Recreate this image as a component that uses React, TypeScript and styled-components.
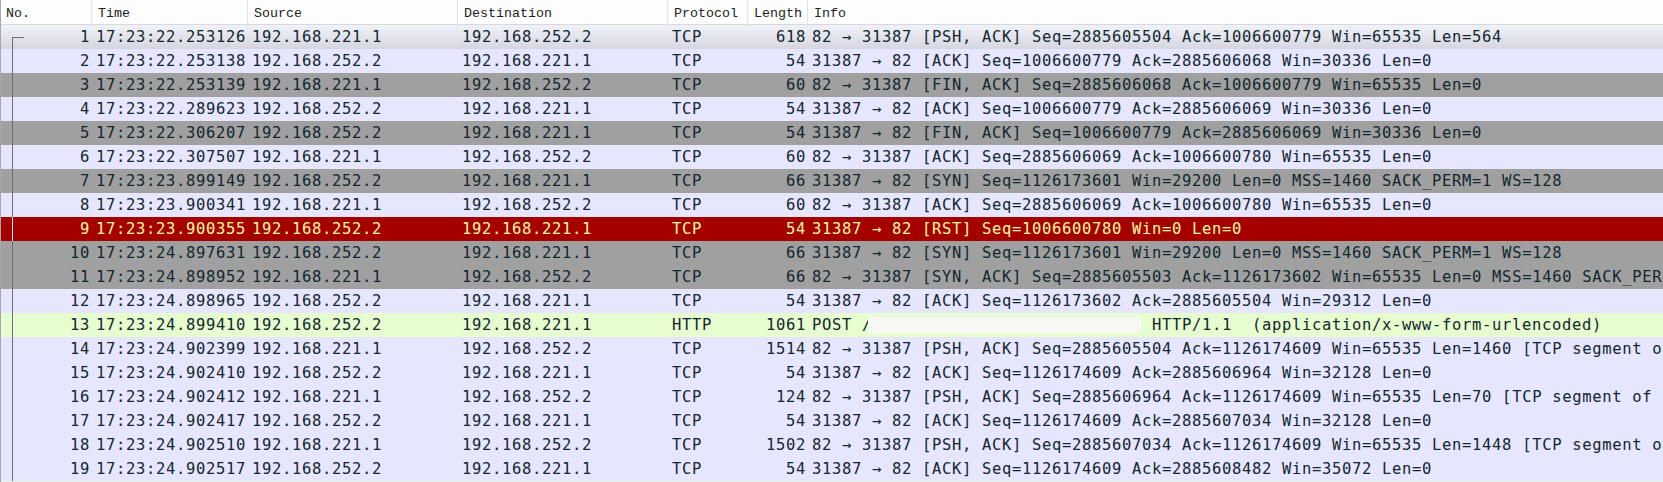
import React from "react";
import styled, { createGlobalStyle, css } from "styled-components";

const Global = createGlobalStyle`
  html, body { margin: 0; padding: 0; background: #fff; overflow: hidden; }
`;

type Kind = "tcp" | "gray" | "red" | "http" | "first";

const palette: Record<Kind, { bg: string; fg: string }> = {
  tcp: { bg: "#e7e6ff", fg: "#12272e" },
  first: { bg: "linear-gradient(#f1f1fa, #d6d6e0)", fg: "#12272e" },
  gray: { bg: "#a0a0a0", fg: "#12272e" },
  red: { bg: "#a40000", fg: "#fffc9c" },
  http: { bg: "#e5fdcf", fg: "#12272e" },
};

const Page = styled.div`
  width: 1663px;
  height: 482px;
  overflow: hidden;
  border-left: 1px solid #a6a6ac;
  box-sizing: border-box;
  background: #e6f6e2;
`;

const Columns = css`
  display: grid;
  grid-template-columns: 91px 156px 210px 210px 80px 60px 1fr;
`;

const Header = styled.div`
  ${Columns}
  height: 24px;
  background: #fdfdfd;
  border-bottom: 1px solid #d9d9dc;
`;

const HeadCell = styled.div`
  font-family: "Liberation Mono", monospace;
  font-size: 13.33px;
  line-height: 27px;
  color: #222;
  padding-left: 6px;
  border-right: 1px solid #e4e4e4;
  white-space: nowrap;
  &:first-child { padding-left: 5px; }
  &:last-child { border-right: none; }
`;

const Row = styled.div<{ $kind: Kind }>`
  ${Columns}
  height: 24px;
  background: ${(p) => palette[p.$kind].bg};
  color: ${(p) => palette[p.$kind].fg};
  font-family: "DejaVu Sans Mono", monospace;
  font-size: 15.5px;
  letter-spacing: 0.67px;
  line-height: 24px;
  white-space: pre;
`;

const Cell = styled.div<{ $right?: boolean }>`
  padding-left: ${(p) => (p.$right ? 0 : "4px")};
  padding-right: ${(p) => (p.$right ? "2px" : 0)};
  text-align: ${(p) => (p.$right ? "right" : "left")};
`;

const NoCell = styled(Cell)<{ $first?: boolean; $light?: boolean }>`
  position: relative;
  &::before {
    content: "";
    position: absolute;
    left: 11px;
    top: ${(p) => (p.$first ? "12px" : 0)};
    bottom: 0;
    width: 1px;
    background: ${(p) => (p.$light ? "#f5f5f5" : "#6f6f78")};
  }
  &::after {
    content: "";
    display: ${(p) => (p.$first ? "block" : "none")};
    position: absolute;
    left: 11px;
    top: 12px;
    width: 12px;
    height: 1px;
    background: #6f6f78;
  }
`;

const Redacted = styled.span`
  display: inline-block;
  width: 273px;
  height: 16px;
  margin: 4px 1px 0 -4px;
  vertical-align: top;
  background: #f7f7f5;
`;

const heads = ["No.", "Time", "Source", "Destination", "Protocol", "Length", "Info"];

const A = "192.168.221.1";
const B = "192.168.252.2";

type P = [string, string, string, string, string, string, React.ReactNode, Kind];

const rows: P[] = [
  ["1", "17:23:22.253126", A, B, "TCP", "618", "82 → 31387 [PSH, ACK] Seq=2885605504 Ack=1006600779 Win=65535 Len=564", "first"],
  ["2", "17:23:22.253138", B, A, "TCP", "54", "31387 → 82 [ACK] Seq=1006600779 Ack=2885606068 Win=30336 Len=0", "tcp"],
  ["3", "17:23:22.253139", A, B, "TCP", "60", "82 → 31387 [FIN, ACK] Seq=2885606068 Ack=1006600779 Win=65535 Len=0", "gray"],
  ["4", "17:23:22.289623", B, A, "TCP", "54", "31387 → 82 [ACK] Seq=1006600779 Ack=2885606069 Win=30336 Len=0", "tcp"],
  ["5", "17:23:22.306207", B, A, "TCP", "54", "31387 → 82 [FIN, ACK] Seq=1006600779 Ack=2885606069 Win=30336 Len=0", "gray"],
  ["6", "17:23:22.307507", A, B, "TCP", "60", "82 → 31387 [ACK] Seq=2885606069 Ack=1006600780 Win=65535 Len=0", "tcp"],
  ["7", "17:23:23.899149", B, A, "TCP", "66", "31387 → 82 [SYN] Seq=1126173601 Win=29200 Len=0 MSS=1460 SACK_PERM=1 WS=128", "gray"],
  ["8", "17:23:23.900341", A, B, "TCP", "60", "82 → 31387 [ACK] Seq=2885606069 Ack=1006600780 Win=65535 Len=0", "tcp"],
  ["9", "17:23:23.900355", B, A, "TCP", "54", "31387 → 82 [RST] Seq=1006600780 Win=0 Len=0", "red"],
  ["10", "17:23:24.897631", B, A, "TCP", "66", "31387 → 82 [SYN] Seq=1126173601 Win=29200 Len=0 MSS=1460 SACK_PERM=1 WS=128", "gray"],
  ["11", "17:23:24.898952", A, B, "TCP", "66", "82 → 31387 [SYN, ACK] Seq=2885605503 Ack=1126173602 Win=65535 Len=0 MSS=1460 SACK_PER", "gray"],
  ["12", "17:23:24.898965", B, A, "TCP", "54", "31387 → 82 [ACK] Seq=1126173602 Ack=2885605504 Win=29312 Len=0", "tcp"],
  ["13", "17:23:24.899410", B, A, "HTTP", "1061", <>POST /<Redacted /> HTTP/1.1  (application/x-www-form-urlencoded)</>, "http"],
  ["14", "17:23:24.902399", A, B, "TCP", "1514", "82 → 31387 [PSH, ACK] Seq=2885605504 Ack=1126174609 Win=65535 Len=1460 [TCP segment o", "tcp"],
  ["15", "17:23:24.902410", B, A, "TCP", "54", "31387 → 82 [ACK] Seq=1126174609 Ack=2885606964 Win=32128 Len=0", "tcp"],
  ["16", "17:23:24.902412", A, B, "TCP", "124", "82 → 31387 [PSH, ACK] Seq=2885606964 Ack=1126174609 Win=65535 Len=70 [TCP segment of", "tcp"],
  ["17", "17:23:24.902417", B, A, "TCP", "54", "31387 → 82 [ACK] Seq=1126174609 Ack=2885607034 Win=32128 Len=0", "tcp"],
  ["18", "17:23:24.902510", A, B, "TCP", "1502", "82 → 31387 [PSH, ACK] Seq=2885607034 Ack=1126174609 Win=65535 Len=1448 [TCP segment o", "tcp"],
  ["19", "17:23:24.902517", B, A, "TCP", "54", "31387 → 82 [ACK] Seq=1126174609 Ack=2885608482 Win=35072 Len=0", "tcp"],
];

export default function App() {
  return (
    <Page>
      <Global />
      <Header>
        {heads.map((h) => (
          <HeadCell key={h}>{h}</HeadCell>
        ))}
      </Header>
      {rows.map(([no, time, src, dst, proto, len, info, kind]) => (
        <Row key={no} $kind={kind}>
          <NoCell $right $first={kind === "first"} $light={kind === "red"}>{no}</NoCell>
          <Cell>{time}</Cell>
          <Cell>{src}</Cell>
          <Cell>{dst}</Cell>
          <Cell>{proto}</Cell>
          <Cell $right>{len}</Cell>
          <Cell>{info}</Cell>
        </Row>
      ))}
    </Page>
  );
}
